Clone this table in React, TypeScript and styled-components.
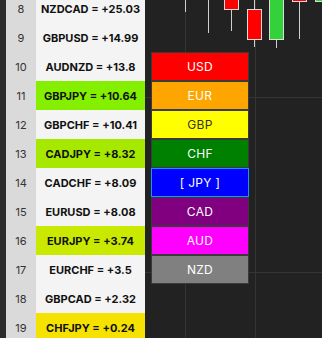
import React from 'react';
import styled, { createGlobalStyle } from 'styled-components';

interface IPair {
  rank: number;
  name: string;
  score: number;
  color: string;
}

interface ICurrency {
  code: string;
  bg: string;
  fg: string;
  active?: boolean;
}

interface ICandle {
  x: number;
  open: number;
  close: number;
  high: number;
  low: number;
  up: boolean;
}

const pairs: IPair[] = [
  {rank: 8, name: 'NZDCAD', score: 25.03, color: '#f4f4f4'},
  {rank: 9, name: 'GBPUSD', score: 14.99, color: '#f4f4f4'},
  {rank: 10, name: 'AUDNZD', score: 13.8, color: '#f4f4f4'},
  {rank: 11, name: 'GBPJPY', score: 10.64, color: '#84f000'},
  {rank: 12, name: 'GBPCHF', score: 10.41, color: '#f4f4f4'},
  {rank: 13, name: 'CADJPY', score: 8.32, color: '#a6e800'},
  {rank: 14, name: 'CADCHF', score: 8.09, color: '#f4f4f4'},
  {rank: 15, name: 'EURUSD', score: 8.08, color: '#f4f4f4'},
  {rank: 16, name: 'EURJPY', score: 3.74, color: '#c9ea00'},
  {rank: 17, name: 'EURCHF', score: 3.5, color: '#f4f4f4'},
  {rank: 18, name: 'GBPCAD', score: 2.32, color: '#f4f4f4'},
  {rank: 19, name: 'CHFJPY', score: 0.24, color: '#f5e200'},
];

const currencies: ICurrency[] = [
  {code: 'USD', bg: '#ff0000', fg: '#fff'},
  {code: 'EUR', bg: '#ffa500', fg: '#fff'},
  {code: 'GBP', bg: '#ffff00', fg: '#333'},
  {code: 'CHF', bg: '#008000', fg: '#fff'},
  {code: 'JPY', bg: '#0000ff', fg: '#fff', active: true},
  {code: 'CAD', bg: '#800080', fg: '#fff'},
  {code: 'AUD', bg: '#ff00ff', fg: '#fff'},
  {code: 'NZD', bg: '#808080', fg: '#fff'},
];

// x is the candle centre inside the chart panel
const candles: ICandle[] = [
  {x: 40.5, open: -20, close: -10, high: -30, low: 12, up: true},
  {x: 63.5, open: -20, close: -10, high: -30, low: 33, up: true},
  {x: 86.5, open: -6, close: 9.5, high: -10, low: 31, up: false},
  {x: 109.5, open: 9.5, close: 39.5, high: 0, low: 47, up: false},
  {x: 131.5, open: -6, close: 39.5, high: -10, low: 48, up: true},
  {x: 154.5, open: -6, close: 1.5, high: -10, low: 39, up: false},
  {x: 177.5, open: -6, close: 1.5, high: -10, low: 20, up: true},
];

const GlobalStyle = createGlobalStyle`
  html, body {
    margin: 0;
    padding: 0;
    background: #222;
  }
`;

const Page = styled.div`
  display: flex;
  width: 322px;
  height: 338px;
  overflow: hidden;
  background: #222;
  font-family: Inter, "Liberation Sans", sans-serif;
`;

const EdgeStrip = styled.div`
  width: 6px;
  flex-shrink: 0;
  background: #2c2c2c;
`;

const Table = styled.div`
  width: 139px;
  flex-shrink: 0;
  display: flex;
  flex-direction: column;
  margin-top: -6px;
`;

const Row = styled.div`
  display: grid;
  grid-template-columns: 30px 1fr;
  height: 29px;
  flex-shrink: 0;
`;

const RankCell = styled.div`
  display: flex;
  align-items: center;
  justify-content: center;
  background: #dadada;
  color: #333;
  font-size: 11px;
  font-weight: 400;
`;

const PairCell = styled.div<{$bg: string}>`
  display: flex;
  align-items: center;
  justify-content: center;
  background: ${p => p.$bg};
  color: #111;
  font-size: 11px;
  font-weight: 700;
  white-space: nowrap;
`;

const ChartPanel = styled.div`
  position: relative;
  flex: 1;
`;

const ChartSvg = styled.svg`
  display: block;
`;

const Legend = styled.ul`
  position: absolute;
  top: 52px;
  left: 6px;
  width: 98px;
  margin: 0;
  padding: 0;
  list-style: none;
`;

const LegendItem = styled.li<{$bg: string; $fg: string; $active?: boolean}>`
  box-sizing: border-box;
  height: 29px;
  display: flex;
  align-items: center;
  justify-content: center;
  border: 1px solid ${p => (p.$active ? '#1e90ff' : '#3a3a3a')};
  background: ${p => p.$bg};
  color: ${p => p.$fg};
  font-size: 12px;
  font-weight: 400;
  letter-spacing: 0.3px;
`;

const Chart = () => (
  <ChartSvg width={177} height={338} viewBox="0 0 177 338">
    <g stroke="#343434" strokeWidth={1}>
      <line x1={40.5} y1={0} x2={40.5} y2={338} />
      <line x1={110.5} y1={0} x2={110.5} y2={338} />
      <line x1={0} y1={97.5} x2={177} y2={97.5} />
      <line x1={0} y1={272.5} x2={177} y2={272.5} />
    </g>
    {candles.map((c, i) => {
      const top = Math.min(c.open, c.close);
      const bottom = Math.max(c.open, c.close);
      return (
        <g key={i}>
          <line x1={c.x} y1={c.high} x2={c.x} y2={c.low} stroke="#cfcfcf" strokeWidth={1} />
          <rect
            x={c.x - 7}
            y={top}
            width={14}
            height={bottom - top}
            fill={c.up ? '#33d23a' : '#ff0000'}
            stroke="#dcdcdc"
            strokeWidth={1}
          />
        </g>
      );
    })}
  </ChartSvg>
);

const App = () => {
  return (
    <>
      <GlobalStyle />
      <Page>
        <EdgeStrip />
        <Table>
          {pairs.map(p => (
            <Row key={p.rank}>
              <RankCell>{p.rank}</RankCell>
              <PairCell $bg={p.color}>
                {p.name} = +{p.score}
              </PairCell>
            </Row>
          ))}
        </Table>
        <ChartPanel>
          <Chart />
          <Legend>
            {currencies.map(c => (
              <LegendItem key={c.code} $bg={c.bg} $fg={c.fg} $active={c.active}>
                {c.active ? `[ ${c.code} ]` : c.code}
              </LegendItem>
            ))}
          </Legend>
        </ChartPanel>
      </Page>
    </>
  );
};

export default App;
